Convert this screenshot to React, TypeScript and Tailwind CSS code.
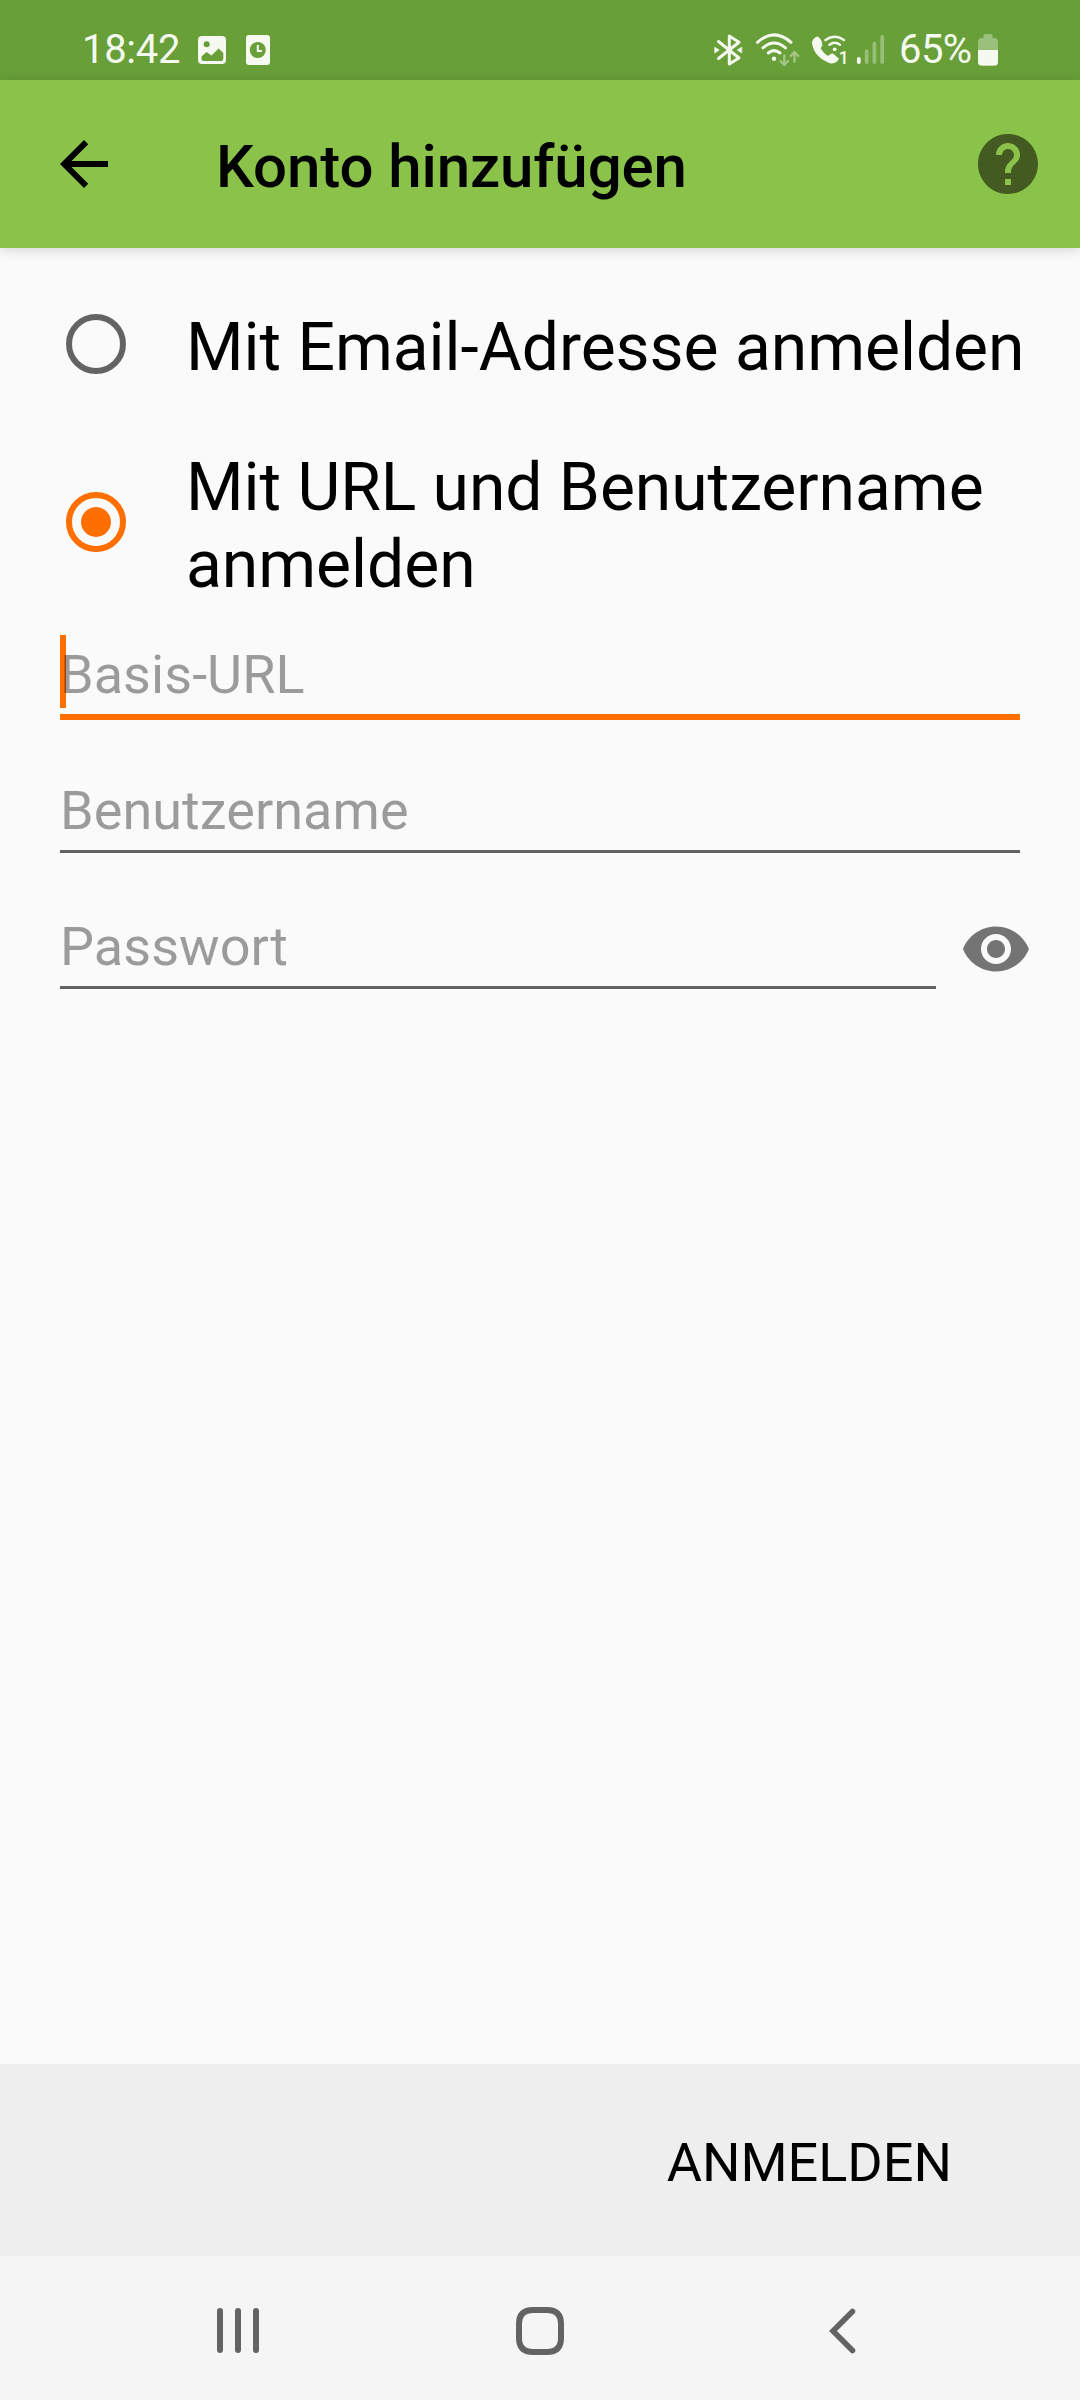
import React from "react";

function StatusBar() {
  return (
    <header className="flex h-20 items-center bg-[#689f38] text-[#f5f9ef]">
      <span className="mt-[19px] ml-[82px] w-[100px] text-[40px] leading-[48px] tracking-[-0.3px]">18:42</span>
      <svg className="ml-4 h-20 w-7" viewBox="198 0 28 80">
        <rect x="198" y="36" width="28" height="28" rx="4" fill="#f5f9ef" />
        <circle cx="206.7" cy="44.3" r="3" fill="#689f38" />
        <path d="M201.5 56.5L206.5 52L211.5 55.5L218.5 48.5L223.3 53V59Q223.3 61 221.3 61H203.5Q201.5 61 201.5 59Z" fill="#689f38" />
      </svg>
      <svg className="ml-5 h-20 w-6" viewBox="246 0 24 80">
        <rect x="246" y="35" width="24" height="30" rx="3" fill="#f5f9ef" />
        <circle cx="257.8" cy="50" r="8" fill="#689f38" />
        <path d="M257.8 45V51H262" fill="none" stroke="#f5f9ef" strokeWidth="2" />
      </svg>
      <svg className="ml-[444px] h-20 w-[176px]" viewBox="714 0 176 80" fill="none" stroke="#f5f9ef" strokeWidth="3" strokeLinecap="round" strokeLinejoin="round">
        <path d="M718.5 41.5L739 58L729.3 64V36L739 42.3L718.5 58.5" />
        <path d="M715 47.5L719.2 50L715 52.8ZM741.5 47.5L737.3 50L741.5 52.8Z" fill="#f5f9ef" strokeWidth="0.8" />
        <path d="M757.5 42.3Q774 27.5 791 42.3M763 47.8Q774 38.3 785.5 47.8M768.3 53Q774 48.2 780 53" />
        <circle cx="774" cy="58.7" r="2.2" fill="#f5f9ef" stroke="none" />
        <path d="M784.3 55.5V64.5M780.5 61L784.3 65L788 61M794.5 61.5V52.5M790.7 56L794.5 52L798.3 56" stroke="#a4c586" strokeWidth="2.4" />
        <path d="M816.5 36.7Q812 38.7 812 43.3Q814 57.3 830 63.2Q836 64.3 839 58.8L833 53.4Q830 53.2 828 56Q822.7 52.7 820.7 48Q823 46 822.2 43.3Q821.5 39.5 818.5 37Q817.5 36.3 816.5 36.7Z" fill="#f5f9ef" stroke="none" />
        <path d="M825.5 40Q834.7 33.7 844 40M829.5 44.7Q834.7 40.7 840 44.7" strokeWidth="2.5" />
        <circle cx="834.7" cy="49.3" r="1.9" fill="#f5f9ef" stroke="none" />
        <text x="838.8" y="63.7" fontSize="17.5" fontWeight="500" fill="#f5f9ef" stroke="none">1</text>
        <path d="M858.8 59V62" strokeWidth="3.8" />
        <path d="M866.7 51.2V62M874.4 43.6V62M882.2 37V62" stroke="#97bd76" strokeWidth="3.8" />
      </svg>
      <span className="mt-[19px] ml-[9px] w-[75px] text-[40px] leading-[48px] tracking-[-0.6px]">65%</span>
      <svg className="ml-1 h-20 w-5" viewBox="978 0 20 80">
        <path d="M983.5 38V36Q983.5 34 985.5 34H990.5Q992.5 34 992.5 36V38H994Q998 38 998 42V62Q998 66 994 66H982Q978 66 978 62V42Q978 38 982 38Z" fill="#9bc07b" />
        <path d="M978 50H998V62Q998 65.5 994 65.5H982Q978 65.5 978 62Z" fill="#f5f9ef" />
      </svg>
    </header>
  );
}

function AppBar() {
  return (
    <div className="relative flex h-[168px] items-center bg-[#8bc34a] shadow-[0_2px_12px_rgba(0,0,0,0.15)]">
      <svg className="ml-12 h-[72px] w-[72px]" viewBox="0 0 24 24">
        <path d="M20 11H7.83l5.59-5.59L12 4l-8 8 8 8 1.41-1.41L7.83 13H20v-2z" />
      </svg>
      <h1 className="mt-[5px] ml-24 flex-1 text-[60px] leading-[70px] font-medium tracking-[-0.1px]">Konto hinzufügen</h1>
      <svg className="mr-9 h-[72px] w-[72px]" viewBox="0 0 24 24" fill="#435b21">
        <path d="M12 2C6.48 2 2 6.48 2 12s4.48 10 10 10 10-4.48 10-10S17.52 2 12 2zm1 17h-2v-2h2v2zm2.07-7.75l-.9.92C13.45 12.9 13 13.5 13 15h-2v-.5c0-1.1.45-2.1 1.17-2.83l1.24-1.26c.37-.36.59-.86.59-1.41 0-1.1-.9-2-2-2s-2 .9-2 2H8c0-2.21 1.79-4 4-4s4 1.79 4 4c0 .88-.36 1.68-.93 2.25z" />
      </svg>
    </div>
  );
}

function RadioOption({ label, checked }: { label: string; checked?: boolean }) {
  return (
    <div role="radio" aria-checked={!!checked} className="flex h-[178px] items-center pl-[66px]">
      <span className={`flex size-[60px] shrink-0 items-center justify-center rounded-full border-[6px] ${checked ? "border-[#ff6f00]" : "border-[#636363]"}`}>
        {checked && <span className="size-[30px] rounded-full bg-[#ff6f00]" />}
      </span>
      <span className="mt-[7px] ml-[60px] w-[860px] text-[66px] leading-[77px] tracking-[-0.05px]">{label}</span>
    </div>
  );
}

function Hint({ children, focused }: { children: string; focused?: boolean }) {
  return (
    <div className="relative flex-1 pb-[3px] text-[54px] leading-[73px] tracking-[0.05px] text-black/38">
      {focused && <span className="absolute top-[-3px] left-0 h-[73px] w-1.5 bg-[#ff6f00]" />}
      <span className="relative">{children}</span>
    </div>
  );
}

function NavBar() {
  return (
    <nav className="flex h-36 items-center justify-between bg-[#f5f5f5] pt-[5px] pr-[223px] pl-[217px]">
      <div className="flex gap-3">
        <span className="h-[45px] w-1.5 rounded-full bg-[#636363]" />
        <span className="h-[45px] w-1.5 rounded-full bg-[#636363]" />
        <span className="h-[45px] w-1.5 rounded-full bg-[#636363]" />
      </div>
      <svg className="ml-[-8px] h-12 w-12" viewBox="0 0 48 48" fill="none" stroke="#636363" strokeWidth="6">
        <path d="M17 3H31Q45 3 45 17V31Q45 45 31 45H17Q3 45 3 31V17Q3 3 17 3Z" />
      </svg>
      <svg className="h-[46px] w-7" viewBox="0 0 28 46" fill="none" stroke="#636363" strokeWidth="5.6" strokeLinecap="round">
        <path d="M23.5 3.5L4 23L23.5 42.5" />
      </svg>
    </nav>
  );
}

export default function App() {
  return (
    <div className="flex h-[2400px] w-[1080px] flex-col overflow-hidden bg-[#fafafa] font-[Roboto,sans-serif] text-black">
      <StatusBar />
      <AppBar />
      <main className="flex-1 pt-[7px]">
        <div role="radiogroup">
          <RadioOption label="Mit Email-Adresse anmelden" />
          <RadioOption label="Mit URL und Benutzername anmelden" checked />
        </div>
        <div className="mr-[60px] ml-[60px] flex h-[109px] items-end border-b-[6px] border-[#ff6f00]">
          <Hint focused>Basis-URL</Hint>
        </div>
        <div className="mr-[60px] ml-[60px] flex h-[133px] items-end border-b-[3px] border-[#636363]">
          <Hint>Benutzername</Hint>
        </div>
        <div className="flex h-[136px] items-end pl-[60px]">
          <div className="flex w-[876px] border-b-[3px] border-[#636363]">
            <Hint>Passwort</Hint>
          </div>
          <svg className="mb-1 ml-6 h-[72px] w-[72px]" viewBox="0 0 24 24" fill="#747474">
            <path d="M12 4.5C7 4.5 2.73 7.61 1 12c1.73 4.39 6 7.5 11 7.5s9.27-3.11 11-7.5c-1.73-4.39-6-7.5-11-7.5zM12 17c-2.76 0-5-2.24-5-5s2.24-5 5-5 5 2.24 5 5-2.24 5-5 5zm0-8c-1.66 0-3 1.34-3 3s1.34 3 3 3 3-1.34 3-3-1.34-3-3-3z" />
          </svg>
        </div>
      </main>
      <footer className="flex h-48 items-center justify-end bg-[#eeeeee] pr-32">
        <button className="mt-[5px] text-[54px] leading-[64px]">ANMELDEN</button>
      </footer>
      <NavBar />
    </div>
  );
}
